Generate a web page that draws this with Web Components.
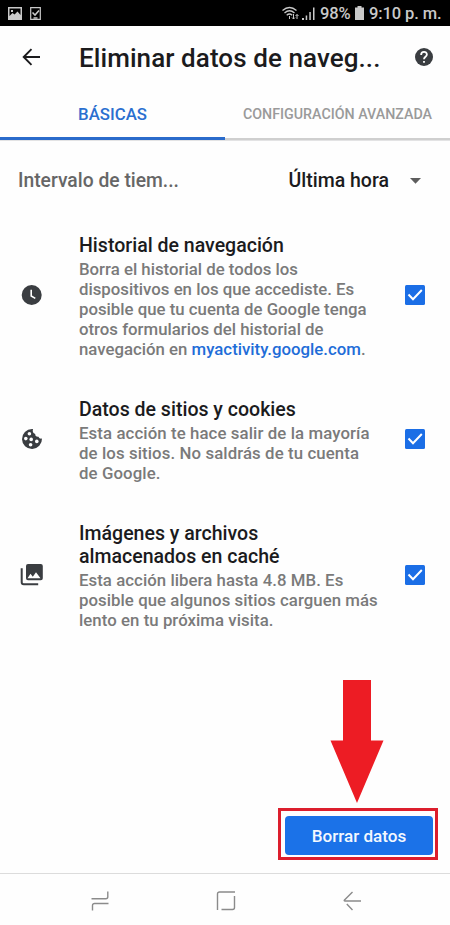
<!DOCTYPE html>
<html lang="es">
<head>
<meta charset="utf-8">
<title>Eliminar datos de navegación</title>
<style>
  html, body { margin: 0; height: 925px; overflow: hidden; background: #fefefe; }
  body { font-family: Roboto, "Liberation Sans", sans-serif; font-weight: 500; color: #1b1b1d; }
</style>
</head>
<body>
<clear-data-screen></clear-data-screen>
<script>
  const define = (name, html) => {
    const template = document.createElement('template');
    template.innerHTML = html;
    customElements.define(name, class extends HTMLElement {
      constructor() {
        super();
        this.attachShadow({ mode: 'open' }).append(template.content.cloneNode(true));
      }
    });
  };

  const icons = {
    clock: '<circle cx="11.700" cy="12" r="10" fill="#3a3d41"/><path d="M11.200 6.800v6.200l4.100 2.400" fill="none" stroke="#fff" stroke-width="1.600"/>',
    cookie: '<path d="M12 2a10 10 0 1 0 10 9.600c-1.500.5-3-.3-3.500-1.800-2 .3-3.400-.8-3.300-2.700-2-.5-3-2.500-2.200-5Q12.500 2 12 2z" fill="#3a3d41"/><g fill="#fff"><circle cx="9.400" cy="6.800" r="1.800"/><circle cx="5.800" cy="11.600" r="1.800"/><circle cx="11.200" cy="12.400" r="1.800"/><circle cx="16.800" cy="14.400" r="1.800"/><circle cx="10.600" cy="17.800" r="1.800"/></g>',
    images: '<path d="M22.800 15.200V3a2 2 0 0 0-2-2H8a2 2 0 0 0-2 2v12.200a2 2 0 0 0 2 2h12.800a2 2 0 0 0 2-2z" fill="#3a3d41"/><path d="M7.500 15.200l3-4.500 2.300 3 3.200-4.500 4.500 6z" fill="#fff"/><path d="M1.700 5.300v14a2 2 0 0 0 2 2h14.500" fill="none" stroke="#3a3d41" stroke-width="2"/>'
  };
  customElements.define('row-icon', class extends HTMLElement {
    constructor() {
      super();
      this.attachShadow({ mode: 'open' }).innerHTML =
        `<style>:host{display:block;width:24px;height:24px}svg{display:block}</style>
         <svg width="24" height="24" viewBox="0 0 24 24">${icons[this.getAttribute('name')]}</svg>`;
    }
  });

  define('status-bar', `
    <style>
      :host { display: flex; align-items: center; height: 26px; padding: 0 8px; background: #000; color: #c9c9c9; font-size: 16.500px; line-height: 26px; white-space: nowrap; }
      svg { display: block; flex: none; }
      .left { display: flex; gap: 8px; flex: 1; }
      .wifi { margin-right: 3px; }
      .pct { margin: 2px 0 0 5px; width: 31px; letter-spacing: -.1px; }
      .bat { margin-left: 4px; }
      .time { margin: 2px 0 0 5px; width: 73px; letter-spacing: -.1px; }
    </style>
    <div class="left">
      <svg width="14" height="13" viewBox="0 0 14 13"><path fill="#c9c9c9" fill-rule="evenodd" d="M0 0h14v13H0zM1.500 1.500v7.500l3-3 2 1.500 3-3 3 3.500V1.500zM3 3h2v2H3z"/></svg>
      <svg width="11" height="13" viewBox="0 0 11 13" fill="none" stroke="#c9c9c9"><path stroke-width="1.200" d="M.7.600h9.600v11.800H.7z"/><path stroke-width="1.500" d="M2.500 5.500l2.500 2.600 4-4.600"/><path stroke-width="1.500" d="M3.500 11h4"/></svg>
    </div>
    <svg class="wifi" width="17" height="14" viewBox="0 0 17 14" fill="none" stroke="#c9c9c9" stroke-width="1.300"><path d="M.5 4.500q7-6 14 0M2.500 7q5-4.500 10 0M4.700 9.300q2.800-2.500 5.500 0"/><path d="M7.500 10v3M11.500 8v5M10 11.500l1.500 1.500 1.500-1.500M15 13V8.500M13.500 10L15 8.500l1.500 1.500" stroke-width="1"/></svg>
    <svg width="13" height="13" viewBox="0 0 13 13"><path fill="#c9c9c9" d="M0 11h2v2H0zM3.700 8.500h1.500V13H3.700zM7.300 5h1.500v8H7.300zM11 .5h1.500V13H11z"/></svg>
    <span class="pct">98%</span>
    <svg class="bat" width="9" height="14" viewBox="0 0 9 14"><path fill="#c9c9c9" d="M2.500 0h4v1.500H9V14H0V1.500h2.500z"/></svg>
    <span class="time">9:10 p. m.</span>`);

  define('app-header', `
    <style>
      :host { display: flex; align-items: center; height: 62px; padding: 0 17px 0 21px; }
      svg { display: block; flex: none; }
      h1 { margin: 1px 0 0 38px; flex: 1; font-size: 26px; letter-spacing: .08px; font-weight: 500; line-height: 32px; white-space: nowrap; }
    </style>
    <svg width="20" height="18" viewBox="0 0 20 18" fill="none" stroke="#1b1b1d" stroke-width="1.900"><path d="M19 9H3M10.500 1.200L2.700 9l7.800 7.800"/></svg>
    <h1><slot></slot></h1>
    <svg width="18" height="18" viewBox="0 0 20 20"><circle cx="10" cy="10" r="10" fill="#3a3d41"/><path d="M6.800 7.700C6.800 3.300 13.200 3.300 13.200 7.300c0 2.400-3.200 2.500-3.200 5.100" fill="none" stroke="#fff" stroke-width="2"/><path d="M9 14.500h2v2H9z" fill="#fff"/></svg>`);

  define('tab-bar', `
    <style>
      :host { display: grid; grid-template-columns: 1fr 1fr; height: 52px; text-align: center; line-height: 53px; white-space: nowrap; border-bottom: 1px solid #e3e3e4; }
      ::slotted(*) { box-sizing: border-box; height: 52px; border-bottom: 2px solid #cfcfcf; font-size: 14.250px; color: #9a9a9a; }
      ::slotted([selected]) { border-bottom: 3px solid #2a6bcb; font-size: 16.800px; line-height: 52px; color: #2a6fd0; }
    </style>
    <slot></slot>`);

  define('time-range', `
    <style>
      :host { display: flex; align-items: center; height: 40px; padding: 20px 29px 0 18px; font-size: 19.300px; line-height: 40px; white-space: nowrap; }
      .label { flex: 1; color: #666; }
      .value { font-size: 19.500px; }
      svg { display: block; margin-left: 21px; }
    </style>
    <span class="label"><slot name="label"></slot></span>
    <span class="value"><slot></slot></span>
    <svg width="11" height="6" viewBox="0 0 11 6"><path d="M0 0h11L5.500 5.800z" fill="#5d5d5d"/></svg>`);

  define('check-box', `
    <style>:host { display: block; width: 20px; height: 20px; } svg { display: block; }</style>
    <svg width="20" height="20" viewBox="0 0 20 20"><rect width="20" height="20" rx="1.500" fill="#1b6ee6"/><path d="M3.500 9.500l4.500 4.700 8.800-9.200" fill="none" stroke="#fff" stroke-width="2"/></svg>`);

  define('data-row', `
    <style>
      :host { display: grid; grid-template-columns: 24px 306px 20px; align-items: center; padding-left: 20px; }
      .text { padding-left: 35px; white-space: nowrap; width: 300px; }
      .icon, check-box { margin-top: -4px; }
      check-box { margin-left: 55px; }
      h2 { margin: 0; font-size: 19.550px; line-height: 23px; font-weight: 500; }
      p { margin: 2px 0 1px; font-size: 16.800px; line-height: 20px; letter-spacing: var(--summary-spacing, 0); color: #7a7a7a; }
      ::slotted(a) { color: #1f6dd8; }
    </style>
    <div class="icon"><slot name="icon"></slot></div>
    <div class="text"><h2><slot name="title"></slot></h2><p><slot></slot></p></div>
    <check-box></check-box>`);

  define('confirm-button', `
    <style>
      :host { display: block; position: relative; box-sizing: border-box; width: 160px; height: 52px; padding: 5px 2px 4px 4px; border: 3px solid #dc1e2d; }
      button { display: block; width: 148px; height: 39px; padding: 0; border: 0; border-radius: 4px; background: #1b72e8; color: #f4f9ff; font: inherit; font-size: 17.100px; }
      svg { position: absolute; left: 49px; top: -131px; }
    </style>
    <svg width="54" height="124" viewBox="0 0 54 124"><path d="M13 0h28v60.500h12.500L27 123 .5 60.500H13z" fill="#ed1c24"/></svg>
    <button><slot></slot></button>`);

  define('nav-bar', `
    <style>
      :host { display: flex; justify-content: space-between; align-items: center; box-sizing: border-box; height: 52px; padding: 3px 89px 0 91px; border-top: 1px solid #dcdcdc; }
      svg { display: block; fill: none; stroke: #8b8b8b; stroke-width: 1.400; }
    </style>
    <svg width="18" height="20" viewBox="0 0 18 20"><path d="M.5 7.800h14.300a2 2 0 0 0 2-2V.5M1.500 19.500v-5a2 2 0 0 1 2-2h14"/></svg>
    <svg width="20" height="20" viewBox="0 0 20 20"><path d="M1.500 19V3a2 2 0 0 1 2-2H19M18.500 5v11.500a2 2 0 0 1-2 2H5.500"/></svg>
    <svg width="18" height="20" viewBox="0 0 18 20"><path d="M9.500 1L1.500 9q-.8 1 .5 1h16M3.800 13l5.700 6"/></svg>`);

  define('clear-data-screen', `
    <style>
      :host { display: flex; flex-direction: column; width: 450px; height: 925px; }
      .rows { display: flex; flex-direction: column; gap: 38px; padding-top: 33px; flex: 1; }
      .cookies { --summary-spacing: .1px; }
      .cache { --summary-spacing: .05px; }
      confirm-button { align-self: flex-end; margin: 0 12px 13px 0; }
    </style>
    <status-bar></status-bar>
    <app-header>Eliminar datos de naveg...</app-header>
    <tab-bar><div selected>BÁSICAS</div><div>CONFIGURACIÓN AVANZADA</div></tab-bar>
    <time-range><span slot="label">Intervalo de tiem...</span>Última hora</time-range>
    <div class="rows">
      <data-row><row-icon slot="icon" name="clock"></row-icon><span slot="title">Historial de navegación</span>Borra el historial de todos los<br>dispositivos en los que accediste. Es<br>posible que tu cuenta de Google tenga<br>otros formularios del historial de<br>navegación en <a>myactivity.google.com</a>.</data-row>
      <data-row class="cookies"><row-icon slot="icon" name="cookie"></row-icon><span slot="title">Datos de sitios y cookies</span>Esta acción te hace salir de la mayoría<br>de los sitios. No saldrás de tu cuenta<br>de Google.</data-row>
      <data-row class="cache"><row-icon slot="icon" name="images"></row-icon><span slot="title">Imágenes y archivos<br>almacenados en caché</span>Esta acción libera hasta 4.8 MB. Es<br>posible que algunos sitios carguen más<br>lento en tu próxima visita.</data-row>
    </div>
    <confirm-button>Borrar datos</confirm-button>
    <nav-bar></nav-bar>`);
</script>
</body>
</html>
